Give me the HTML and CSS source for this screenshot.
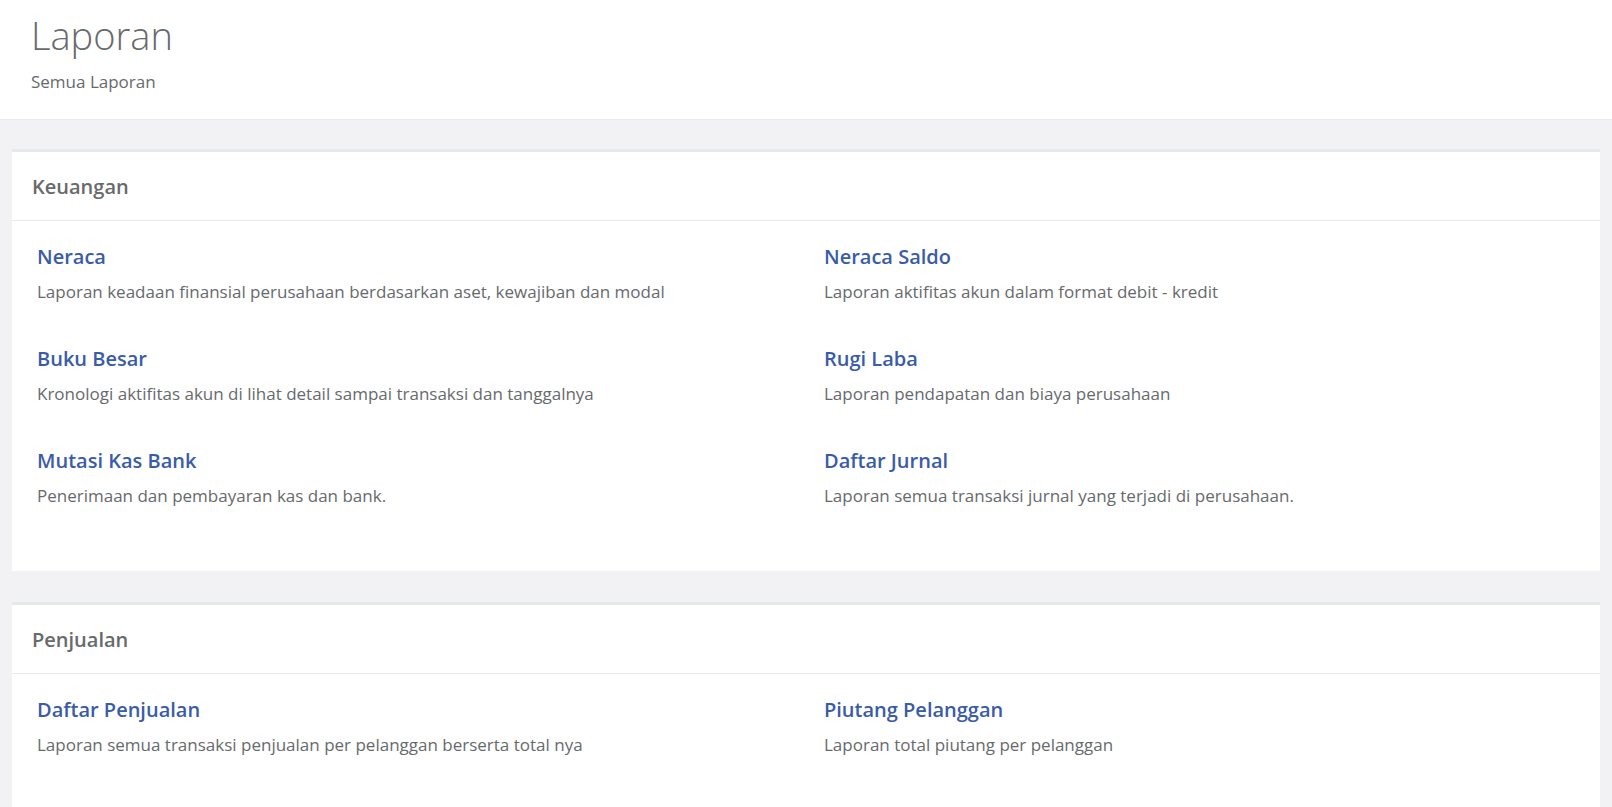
FILE: index.html
```html
<!DOCTYPE html>
<html lang="id">
<head>
<meta charset="utf-8">
<title>Laporan</title>
<link rel="stylesheet" href="styles.css">
</head>
<body>
<header class="page-heading">
  <h1 class="page-title">Laporan</h1>
  <div class="page-sub">Semua Laporan</div>
</header>
<main class="content">
  <section class="card">
    <div class="card-title">Keuangan</div>
    <div class="card-body">
      <div class="report">
        <a class="report-name" href="#">Neraca</a>
        <p class="report-desc">Laporan keadaan finansial perusahaan berdasarkan aset, kewajiban dan modal</p>
      </div>
      <div class="report">
        <a class="report-name" href="#">Neraca Saldo</a>
        <p class="report-desc">Laporan aktifitas akun dalam format debit - kredit</p>
      </div>
      <div class="report">
        <a class="report-name" href="#">Buku Besar</a>
        <p class="report-desc">Kronologi aktifitas akun di lihat detail sampai transaksi dan tanggalnya</p>
      </div>
      <div class="report">
        <a class="report-name" href="#">Rugi Laba</a>
        <p class="report-desc">Laporan pendapatan dan biaya perusahaan</p>
      </div>
      <div class="report">
        <a class="report-name" href="#">Mutasi Kas Bank</a>
        <p class="report-desc">Penerimaan dan pembayaran kas dan bank.</p>
      </div>
      <div class="report">
        <a class="report-name" href="#">Daftar Jurnal</a>
        <p class="report-desc">Laporan semua transaksi jurnal yang terjadi di perusahaan.</p>
      </div>
    </div>
  </section>
  <section class="card">
    <div class="card-title">Penjualan</div>
    <div class="card-body">
      <div class="report">
        <a class="report-name" href="#">Daftar Penjualan</a>
        <p class="report-desc">Laporan semua transaksi penjualan per pelanggan berserta total nya</p>
      </div>
      <div class="report">
        <a class="report-name" href="#">Piutang Pelanggan</a>
        <p class="report-desc">Laporan total piutang per pelanggan</p>
      </div>
    </div>
  </section>
</main>
</body>
</html>
```
FILE: styles.css
```css
html, body {
  margin: 0;
  padding: 0;
}
body {
  background: #f2f2f4;
  font-family: "Open Sans", "Noto Sans", sans-serif;
  color: #676a6c;
}
.page-heading {
  background: #ffffff;
  border-bottom: 1px solid #e7eaec;
  padding: 14px 31px 26px;
}
.page-title {
  margin: 0;
  font-size: 38px;
  line-height: 42px;
  font-weight: 300;
  color: #676a6c;
}
.page-sub {
  margin-top: 15px;
  font-size: 17px;
  line-height: 22px;
  color: #676a6c;
}
.content {
  padding: 29px 12px 30px;
}
.card {
  background: #ffffff;
  border-top: 3px solid #e5e9ea;
  margin-bottom: 31px;
}
.card-title {
  padding: 21px 20px 19px;
  font-size: 20px;
  line-height: 28px;
  font-weight: 600;
  color: #676a6c;
  border-bottom: 1px solid #e7eaec;
}
.card-body {
  display: grid;
  grid-template-columns: 1fr 1fr;
  column-gap: 36px;
  padding: 22px 25px 22px;
}
.report {
  margin-bottom: 41px;
}
.report-name {
  display: block;
  font-size: 20px;
  line-height: 28px;
  font-weight: 600;
  color: #3a5ca8;
  text-decoration: none;
}
.report-desc {
  margin: 9px 0 0;
  font-size: 17px;
  line-height: 24px;
  color: #676a6c;
}
```
